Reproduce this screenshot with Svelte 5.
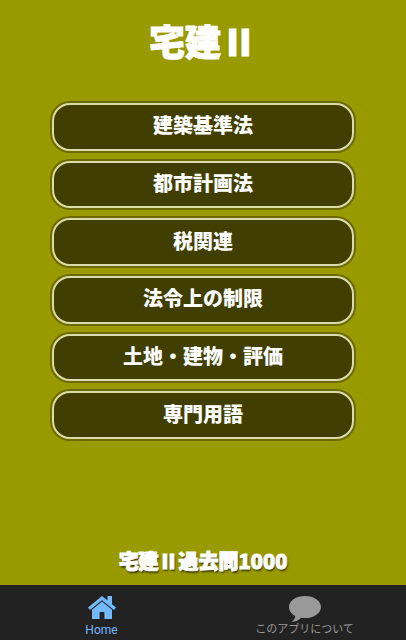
<script lang="ts">
    let categories = [
        "建築基準法",
        "都市計画法",
        "税関連",
        "法令上の制限",
        "土地・建物・評価",
        "専門用語"
    ];
    let current_tab = "home";
    function ShowHome() {current_tab = "home";}
    function ShowAbout() {current_tab = "about";}
</script>

<div class="app">
    <main>
        <h1>宅建Ⅱ</h1>
        <div class="category-list">
            {#each categories as category}
                <button class="category-button">{category}</button>
            {/each}
        </div>
        <p class="app-name">宅建Ⅱ過去問1000</p>
    </main>
    <nav>
        <button class="tab" class:tab-on={current_tab == "home"} on:click={ShowHome}>
            <svg width="30" height="26" viewBox="0 0 30 26" fill="currentColor" aria-hidden="true">
                <path d="M15 0 L1 11.5 L3 14 L15 4.3 L27 14 L29 11.5 L25 8.2 V0 H20.5 V4.5 Z" />
                <path d="M15 5.6 L5 13.7 V23 H12.6 V16 H17.4 V23 H25 V13.7 Z" />
            </svg>
            <span>Home</span>
        </button>
        <button class="tab" class:tab-on={current_tab == "about"} on:click={ShowAbout}>
            <svg width="34" height="28" viewBox="0 0 34 28" fill="currentColor" aria-hidden="true">
                <path d="M17 2 C8 2 1 6.8 1 13 C1 16.8 3.5 20 7.3 22 C7 24.6 5.5 26.6 3.5 28 C7.5 27.9 11 26.4 13 23.8 C14.3 24 15.6 24.1 17 24.1 C26 24.1 33 19.2 33 13 C33 6.8 26 2 17 2 Z" />
            </svg>
            <span class="tab-label-small">このアプリについて</span>
        </button>
    </nav>
</div>

<style>
    :global(body) {
        background-color: #999900;
    }
    .app {
        display: flex;
        flex-direction: column;
        min-height: 100vh;
        font-family: "Noto Sans CJK JP", "Noto Sans", sans-serif;
    }
    main {
        display: flex;
        flex-direction: column;
        flex: 1;
        padding: 14px 52px 9px;
    }
    h1 {
        margin: 0;
        color: white;
        font-size: 36px;
        line-height: 52px;
        font-weight: 900;
        text-align: center;
        -webkit-text-stroke: 1px white;
    }
    .category-list {
        display: grid;
        grid-auto-rows: 1fr;
        gap: 10px;
        min-height: 336px;
        margin-top: 37px;
    }
    .category-button {
        background-color: #403e00;
        border: 2px solid #dcdca8;
        border-radius: 18px;
        box-shadow: 0 0 0 2px #6b6900;
        color: white;
        padding: 0 8px 3px;
        font-family: inherit;
        font-size: 20px;
        line-height: 30px;
        font-weight: 900;
        text-align: center;
    }
    .app-name {
        margin: auto 0 0;
        color: white;
        font-size: 20px;
        line-height: 30px;
        font-weight: 900;
        text-align: center;
        white-space: nowrap;
        text-shadow: 1px 2px 2px #333300;
        -webkit-text-stroke: 1px white;
    }
    nav {
        display: flex;
        background-color: #222222;
    }
    .tab {
        display: flex;
        flex-direction: column;
        align-items: center;
        justify-content: flex-end;
        flex: 1;
        height: 55px;
        background-color: transparent;
        border: none;
        color: #999999;
        padding: 0 0 2px;
        font-family: Roboto, "Noto Sans CJK JP", sans-serif;
        font-size: 12px;
        line-height: 16px;
    }
    .tab-label-small {
        font-size: 11px;
    }
    .tab-on {
        color: #73b9ff;
    }
</style>
